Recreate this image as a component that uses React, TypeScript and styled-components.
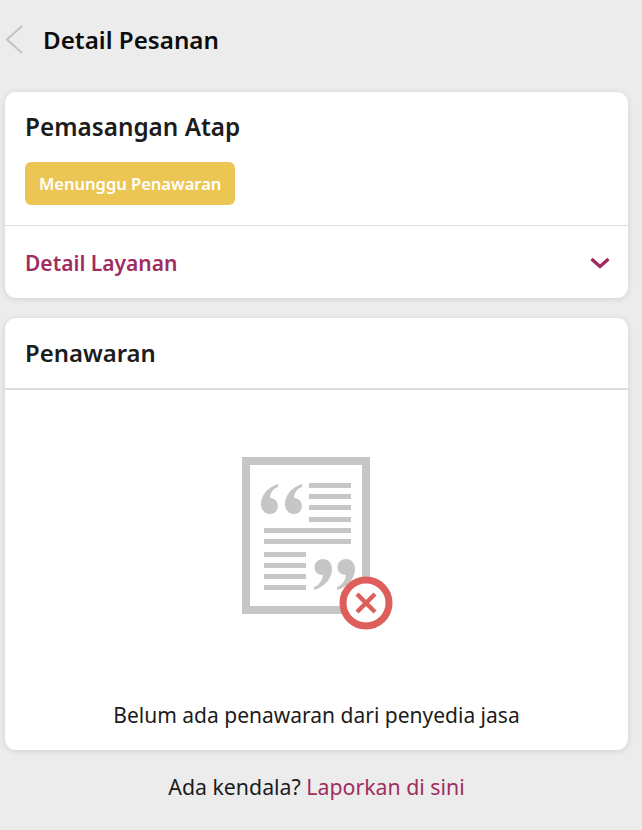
import React from 'react';
import styled, { createGlobalStyle } from 'styled-components';

const GlobalStyle = createGlobalStyle`
  html, body {
    margin: 0;
    padding: 0;
    background: #ececec;
    font-family: "Noto Sans", "Open Sans", sans-serif;
  }
`;

const Page = styled.div`
  width: 642px;
  height: 830px;
  overflow: hidden;
  box-sizing: border-box;
  padding: 0 14px 0 5px;
`;

const Header = styled.header`
  height: 92px;
  display: flex;
  align-items: flex-start;
  padding-top: 24px;
  box-sizing: border-box;
  gap: 20px;
`;

const BackIcon = styled.svg`
  width: 18px;
  height: 32px;
  flex: none;
`;

const HeaderTitle = styled.h1`
  margin: 0;
  font-size: 24.2px;
  line-height: 32px;
  font-weight: 600;
  color: #0c0c0c;
`;

const Card = styled.section<{ $height: number }>`
  height: ${(p) => p.$height}px;
  background: #fff;
  border-radius: 11px;
  box-shadow: 0 1px 6px rgba(0, 0, 0, 0.12);
  display: flex;
  flex-direction: column;
  & + & {
    margin-top: 20px;
  }
`;

const Summary = styled.div`
  height: 134px;
  box-sizing: border-box;
  padding: 19px 20px 0;
  border-bottom: 1px solid #dedede;
`;

const CardTitle = styled.h2<{ $size: number }>`
  margin: 0;
  font-size: ${(p) => p.$size}px;
  line-height: 32px;
  font-weight: 600;
  color: #1c1c1c;
`;

const Badge = styled.span`
  display: inline-block;
  margin-top: 19px;
  height: 43px;
  line-height: 43px;
  padding: 0 14px;
  border-radius: 6px;
  background: #ecc655;
  color: #fff;
  font-size: 16.5px;
  font-weight: 600;
`;

const ServiceRow = styled.div`
  flex: 1;
  display: flex;
  align-items: center;
  justify-content: space-between;
  padding: 2px 18px 0 20px;
`;

const ServiceLabel = styled.span`
  font-size: 21px;
  font-weight: 600;
  color: #a02d5f;
`;

const OfferHeader = styled.div`
  height: 72px;
  box-sizing: border-box;
  padding: 19px 20px 0;
  border-bottom: 2px solid #dedede;
`;

const OfferBody = styled.div`
  flex: 1;
  display: flex;
  flex-direction: column;
  align-items: center;
  padding-top: 67px;
`;

const EmptyIcon = styled.svg`
  width: 152px;
  height: 176px;
  margin-left: 2px;
`;

const EmptyText = styled.p`
  margin: 68px 0 0;
  font-size: 21px;
  line-height: 28px;
  color: #1c1c1c;
`;

const Footer = styled.p`
  margin: 23px 0 0;
  text-align: center;
  font-size: 21.3px;
  line-height: 28px;
  color: #1c1c1c;
`;

const ReportLink = styled.a`
  color: #a02d5f;
  text-decoration: none;
`;

const TOP_LINES = [26, 37, 48, 60];
const MIDDLE_LINES = [71, 82];
const BOTTOM_LINES = [95, 106, 117, 128];

const OPEN_QUOTE = 'M36 27 C26 30 19 38 19 47 C19 53 23 57 28 57 C33 57 36 53 36 49 C36 44 32 41 28 41 C28 36 31 32 36 30 Z';
const CLOSE_QUOTE = 'M72 133 C82 130 90 122 90 112 C90 106 86 102 81 102 C76 102 72.5 106 72.5 110 C72.5 115 76 118 81 118 C80 124 77 128 72 130 Z';

export default function App() {
  return (
    <>
      <GlobalStyle />
      <Page>
        <Header>
          <BackIcon viewBox="0 0 18 32">
            <path d="M17 2 L2 15.5 L17 29" fill="none" stroke="#c4c4c4" strokeWidth="2.2" />
          </BackIcon>
          <HeaderTitle>Detail Pesanan</HeaderTitle>
        </Header>

        <Card $height={206}>
          <Summary>
            <CardTitle $size={24.3}>Pemasangan Atap</CardTitle>
            <Badge>Menunggu Penawaran</Badge>
          </Summary>
          <ServiceRow>
            <ServiceLabel>Detail Layanan</ServiceLabel>
            <svg width="20" height="12" viewBox="0 0 20 12">
              <path d="M1.5 2 L10 9.5 L18.5 2" fill="none" stroke="#a02d5f" strokeWidth="3.4" />
            </svg>
          </ServiceRow>
        </Card>

        <Card $height={432}>
          <OfferHeader>
            <CardTitle $size={23.9}>Penawaran</CardTitle>
          </OfferHeader>
          <OfferBody>
            <EmptyIcon viewBox="0 0 152 176">
              <rect x="4" y="4" width="120" height="149" fill="#fff" stroke="#c6c6c6" strokeWidth="8" />
              <g fill="#c6c6c6">
                {TOP_LINES.map((y) => (
                  <rect key={y} x="67" y={y} width="42" height="5" />
                ))}
                {MIDDLE_LINES.map((y) => (
                  <rect key={y} x="22" y={y} width="87" height="5" />
                ))}
                {BOTTOM_LINES.map((y) => (
                  <rect key={y} x="22" y={y} width="42" height="5" />
                ))}
                <path d={OPEN_QUOTE} />
                <path d={OPEN_QUOTE} transform="translate(24 0)" />
                <path d={CLOSE_QUOTE} />
                <path d={CLOSE_QUOTE} transform="translate(23 0)" />
              </g>
              <circle cx="124" cy="146" r="23" fill="#fff" stroke="#dd5e5a" strokeWidth="7" />
              <path d="M115 137 L133 155 M133 137 L115 155" stroke="#dd5e5a" strokeWidth="4.5" />
            </EmptyIcon>
            <EmptyText>Belum ada penawaran dari penyedia jasa</EmptyText>
          </OfferBody>
        </Card>

        <Footer>
          Ada kendala? <ReportLink href="#">Laporkan di sini</ReportLink>
        </Footer>
      </Page>
    </>
  );
}
